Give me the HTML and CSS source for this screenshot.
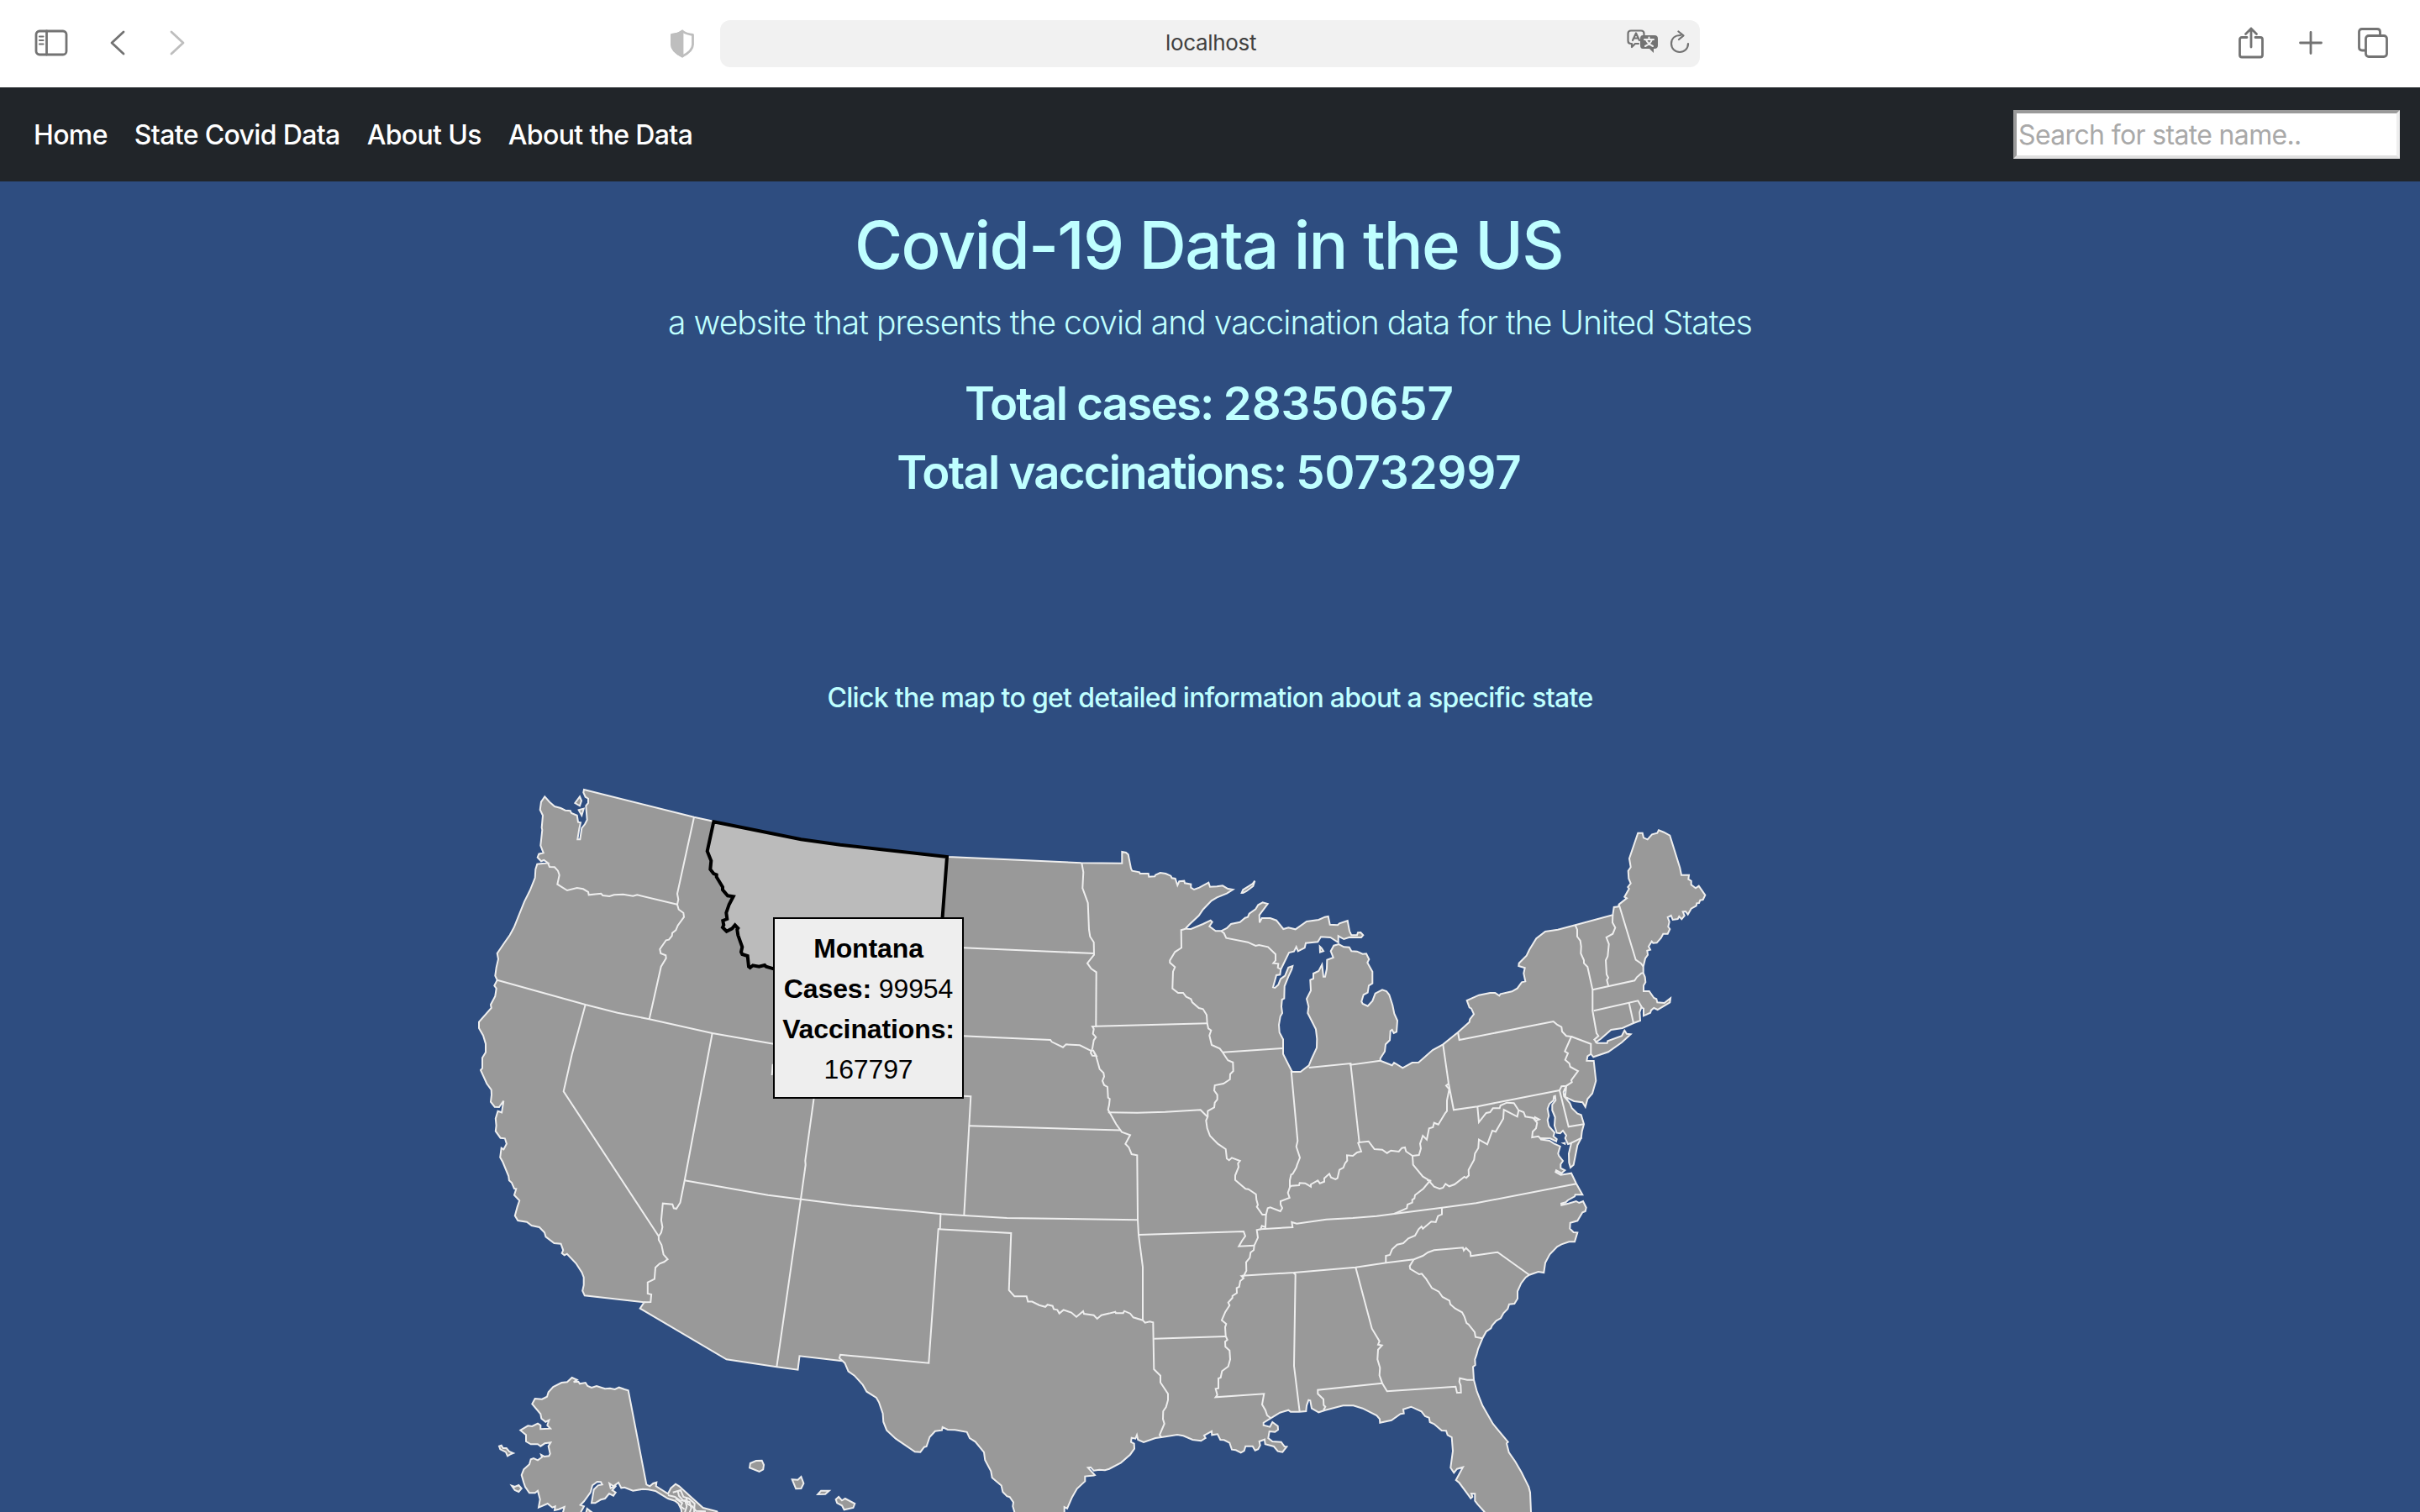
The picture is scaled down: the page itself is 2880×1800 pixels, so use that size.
FILE: index.html
```html
<!DOCTYPE html>
<html lang="en">
<head>
<meta charset="utf-8">
<title>Covid-19 Data in the US</title>
<link rel="stylesheet" href="styles.css">
</head>
<body>
<header class="toolbar">
  <div class="tools tools-left">
    <svg class="icon" width="40" height="32" viewBox="0 0 40 32"><rect x="2" y="2" width="36" height="28" rx="4"/><path d="M14.500 2V30"/><path class="thin" d="M6 8.500h4.500M6 13h4.500M6 17.500h4.500"/></svg>
    <svg class="icon back" width="20" height="30" viewBox="0 0 20 30"><path d="M17 2L3 15L17 28"/></svg>
    <svg class="icon forward pale" width="20" height="30" viewBox="0 0 20 30"><path d="M3 2L17 15L3 28"/></svg>
  </div>
  <svg class="icon shield pale" width="30" height="34" viewBox="0 0 30 34"><path d="M15 2C11 5 6 6 2.500 6.500V18C2.500 25 9 29 15 32C21 29 27.500 25 27.500 18V6.500C24 6 19 5 15 2Z"/><path class="solid" d="M15 2C11 5 6 6 2.500 6.500V18C2.500 25 9 29 15 32Z"/></svg>
  <div class="address">
    <span class="host">localhost</span>
    <svg class="icon translate" width="38" height="30" viewBox="0 0 38 30"><path class="thin" d="M14 17H10L6 21V17H5Q1.500 17 1.500 13.500V5Q1.500 1.500 5 1.500H17Q20.500 1.500 20.500 5V7"/><path class="thin" d="M7 13L11 4.500L15 13M8.500 10.500H13.500"/><path class="solid" stroke="none" d="M19 7H33Q37 7 37 11V19Q37 23 33 23H32V28L27 23H19Q16 23 16 19V11Q16 7 19 7Z"/><path class="glyph" d="M21 12H32M26.500 9.500V12M30 12Q28.500 17 22 20M23 12.500Q25 17 31 20"/></svg>
    <svg class="icon" width="24" height="28" viewBox="0 0 24 28"><path class="thin" d="M13 6C6 6 2 10 2 16C2 22 6.500 26 12 26C17.500 26 22 22 22 16M10.500 1.500L16.500 6.300L11 11"/></svg>
  </div>
  <div class="tools tools-right">
    <svg class="icon" width="32" height="40" viewBox="0 0 32 40"><path d="M11 13.500H5Q2.500 13.500 2.500 16V34.500Q2.500 37 5 37H27Q29.500 37 29.500 34.500V16Q29.500 13.500 27 13.500H21M16 25V3M9.500 9.500L16 3L22.500 9.500"/></svg>
    <svg class="icon plus" width="28" height="28" viewBox="0 0 28 28"><path d="M14 1.500V26.500M1.500 14H26.500"/></svg>
    <svg class="icon tabs" width="38" height="38" viewBox="0 0 38 38"><path d="M10 28H6Q2.500 28 2.500 24.500V6Q2.500 2.500 6 2.500H24Q27.500 2.500 27.500 6V10"/><rect x="10.500" y="10.500" width="25" height="25" rx="3.500"/></svg>
  </div>
</header>

<nav class="navbar">
  <ul class="links">
    <li><a class="home">Home</a></li>
    <li><a class="states">State Covid Data</a></li>
    <li><a class="about">About Us</a></li>
    <li><a class="data">About the Data</a></li>
  </ul>
  <input class="search" type="text" placeholder="Search for state name..">
</nav>

<main>
  <h1>Covid-19 Data in the US</h1>
  <p class="lead">a website that presents the covid and vaccination data for the United States</p>
  <h2 class="cases">Total cases: <span class="count">28350657</span></h2>
  <h2 class="vaccinations">Total vaccinations: <span class="count">50732997</span></h2>
  <p class="hint">Click the map to get detailed information about a specific state</p>
  <div class="map">
    <svg id="us-map" width="2880" height="920" viewBox="0 880 2880 920"></svg>
    <div class="tooltip"><b>Montana</b><br><b>Cases:</b> 99954<br><b>Vaccinations:</b><br>167797</div>
  </div>
</main>
<script src="map.js"></script>
</body>
</html>
```
FILE: styles.css
```css
* { box-sizing: border-box; }
body {
  margin: 0;
  width: 2880px;
  height: 1800px;
  overflow: hidden;
  background: #2e4d80;
  color: #bfffff;
  font-family: Inter, "Liberation Sans", sans-serif;
}
h1, h2, p, ul { margin: 0; padding: 0; font-weight: 400; text-align: center; }

.toolbar {
  height: 104px;
  background: #fff;
  display: flex;
  align-items: center;
  padding: 0 37px 0 41px;
}
.icon { display: block; fill: none; stroke: #737373; stroke-width: 2.8; stroke-linecap: round; stroke-linejoin: round; }
.icon .thin { stroke-width: 2.2; }
.icon .solid { fill: #737373; }
.icon .glyph { stroke: #f1f1f1; stroke-width: 2; }
.pale { stroke: #bebebe; }
.pale .solid { fill: #bebebe; }
.tools { display: flex; align-items: center; margin-top: -2px; }
.tools-left { width: 182px; }
.back { margin-left: 49px; }
.forward { margin-left: 51px; }
.shield { margin-left: 574px; }
.address {
  width: 1166px;
  height: 56px;
  margin-left: 30px;
  padding: 0 12px 0 166px;
  border-radius: 12px;
  background: #f1f1f1;
  display: flex;
  align-items: center;
  gap: 13px;
}
.host { flex: 1; text-align: center; font-size: 26px; line-height: 54px; color: #404040; letter-spacing: -0.33px; padding-right: 64px; padding-bottom: 2px; }
.address .icon { margin-top: -4px; }
.tools-right { margin-left: auto; }
.plus { margin-left: 41px; }
.tabs { margin-left: 41px; }

.navbar {
  height: 112px;
  padding: 0 24px 0 40px;
  background: #212529;
  display: flex;
  align-items: center;
  justify-content: space-between;
}
.links { display: flex; gap: 32px; list-style: none; padding-top: 2px; }
.links a { color: #fff; font-size: 32px; line-height: 48px; letter-spacing: -0.65px; font-weight: 450; }
.search {
  width: 460px;
  height: 58px;
  padding: 2px;
  border: 4px solid;
  border-color: #9a9a9a #eee #e0e0e0 #9a9a9a;
  background: #fff;
  font-family: inherit;
  font-size: 32px;
  letter-spacing: -0.65px;
}
.search::placeholder { color: #a9a9a9; opacity: 1; }

main { padding-top: 28px; }
h1 { font-size: 78px; line-height: 96px; font-weight: 500; letter-spacing: -1.7px; padding-right: 3px; }
.lead { margin-top: 14px; font-size: 39px; line-height: 60px; font-weight: 330; letter-spacing: -0.96px; }
h2 { font-size: 54.5px; line-height: 68px; font-weight: 560; letter-spacing: -1.75px; padding-right: 2px; }
.count { letter-spacing: 0; }
.cases { margin-top: 32px; }
.vaccinations { margin-top: 14px; }
.hint { margin-top: 211px; font-size: 32px; line-height: 48px; font-weight: 450; letter-spacing: -0.7px; }
.map { position: relative; margin-top: 25px; height: 920px; }
.map svg { display: block; }
.land { fill: #999; stroke: #eee; stroke-width: 2; }
.border { fill: none; stroke: #eee; stroke-width: 2; }
.active { fill: #bbb; stroke: #000; stroke-width: 4; }
.tooltip {
  position: absolute;
  left: 920px;
  top: 212px;
  width: 227px;
  height: 216px;
  padding-top: 11px;
  border: 2px solid #000;
  background: #eee;
  color: #000;
  text-align: center;
  font-family: "Liberation Sans", Arial, sans-serif;
  font-size: 32px;
  line-height: 48px;
  letter-spacing: -0.12px;
}
```
FILE: map.js
```js
// Each sheet of the map has its own grid: [origin x, origin y, x scale, y scale].
const sheets = {
  nw: [560, 920, 1 / 3, 1 / 3],
  sw: [560, 1280, 600 / 1568, 1 / 3],
  mt: [820, 940, 1 / 3, 1 / 3],
  plains: [1100, 980, 1 / 3, 820 / 1568],
  lakes: [1320, 980, 1 / 3, 1 / 3],
  ne: [1640, 960, 1 / 3, 1 / 3],
  gulf: [1320, 1380, 1 / 3, 1 / 3],
  se: [1640, 1380, 1 / 3, 1 / 3],
  ak: [580, 1630, 1 / 3, 1 / 3]
};

// Outline of the contiguous states, counterclockwise from the top of Idaho.
const mainland = [
  ["nw", "860,172 798,158 405,60 403,70 410,86 420,92 420,108 412,118 416,168 408,184 397,198 391,238 382,238 388,200 393,178 384,176 380,152 360,144 356,136 338,134 322,126 300,120 282,104 265,85 252,104 248,132 258,152 254,196 256,204 250,260 260,286 244,290 239,302 252,316 262,312 276,322 238,326 232,345 230,375 212,420 192,460 155,552 140,580 122,605 95,645 99,665 92,695 88,725 95,740 85,760 92,770 88,798 72,828 74,840 30,890 30,912 45,938 54,968 54,998 42,1018 42,1055 36,1062 58,1110 74,1132 75,1150 72,1175 86,1193 102,1194 112,1180 118,1172"],
  ["sw", "97,133 85,128 78,155 80,180 78,200 93,224 107,226 112,245 103,265 96,260 92,293 100,310 118,360 120,376 128,384 136,405 142,406 136,428 152,448 145,472 138,502 147,519 175,524 190,537 214,543 230,562 234,577 260,600 281,602 288,625 284,636 292,643 300,638 328,672 346,704 352,722 352,750 348,770 355,787 540,811 527,833 796,1015 952,1042 1018,1052 1023,1003 1157,1021 1164,1028 1175,1058 1194,1073 1220,1106 1232,1130 1262,1152 1270,1168 1282,1208 1284,1238 1294,1268 1322,1298 1382,1345 1399,1346 1411,1328 1418,1326 1428,1292 1445,1271 1466,1268 1468,1257 1484,1266 1508,1267"],
  ["plains", "110,1381 152,1386 162,1400 182,1408 213,1432 217,1450 238,1475 242,1490 275,1508 280,1522 295,1532 305,1534 318,1546 316,1555 322,1568 330,1600 500,1600 500,1557 510,1560 528,1534 545,1515 574,1498 574,1487 605,1485 609,1484 584,1467 594,1466 605,1474 625,1472 645,1473"],
  ["gulf", "0,1106 42,1084 75,1055 90,1034 89,1016 78,1010 80,995 94,998 99,985 103,1002 123,1011 165,996 187,993 243,984 265,988 298,1002 328,1006 344,996 339,987 366,972 367,985 387,982 397,1002 410,1003 430,1013 438,1037 452,1039 470,1048 482,1041 487,1025 512,1025 521,1040 532,1036 539,1022 536,1008 555,1001 557,1018 588,1026 602,1043 619,1046 634,1027 626,1026 614,1010 583,1008 568,996 572,972 592,974 603,966 602,953 583,939 574,956 551,950 551,941 577,925 610,905 640,896 648,902 678,902 703,900 705,880 712,860 718,862 723,890 748,904 772,896 835,880 872,880 905,890 955,915 966,928 967,941 1008,932 1040,910 1052,908 1050,893 1078,884 1115,901 1128,918 1142,923 1145,939 1160,946 1187,969"],
  ["se", "243,970 248,985 263,993 267,1042 259,1102 271,1120 282,1106 303,1100 278,1146 290,1156 331,1211 337,1206 333,1194 346,1195 346,1220 355,1232 380,1260 380,1300 548,1300 546,1260 543,1190 538,1170 512,1118 490,1080 467,1047 459,1015 464,1010 410,945 373,880 353,830 342,788 339,742 347,735 346,715 352,698 357,678 373,640 386,616 403,604 407,594 422,577 438,568 448,550 463,535 468,518 487,516 498,498 498,472 511,443 527,422 540,413 572,402 592,405 597,370 613,340 640,312 655,304 682,295 702,295 712,262 698,261 685,248 686,227 712,220 730,190 740,186 743,173 732,150 718,156 707,150 680,158 655,164 654,158 670,154 678,146 702,133 704,127 730,127 708,88 690,50 652,56 634,46 636,40 655,50 667,40 652,32 652,18 660,6"],
  ["ne", "646,1248 643,1240 650,1214 628,1204 612,1194 582,1190 580,1185 615,1186 636,1196 638,1188 626,1178 630,1165 610,1142 605,1120 610,1105 605,1080 612,1062 626,1050 628,1036 632,1034 634,1050 622,1065 622,1085 632,1110 630,1140 638,1166 650,1168 660,1158 672,1175 668,1185 678,1206 690,1202 681,1240 682,1272 687,1290 698,1280 712,1210 725,1185 728,1160 735,1135 725,1102 712,1097 692,1078 685,1060 664,1035 662,1020 672,998 668,1038 700,1053 730,1057 740,1073 748,1045 765,1025 778,980 770,909 745,908 748,892 760,884 769,895 822,877 870,843 902,814 888,812 880,800 870,820 820,838 818,845 782,845 778,842 795,830 832,798 872,792 912,774 936,765 934,735 940,718 948,722 948,748 972,737 975,728 985,720 998,726 1042,700 1044,685 1022,702 997,700 994,688 985,684 968,660 948,660 948,640 955,628 953,610 947,595 947,572 954,543 963,530 961,515 972,512 966,500 977,482 982,488 995,487 1010,470 1018,455 1034,455 1042,438 1036,430 1040,412 1034,396 1046,390 1052,405 1070,402 1075,393 1084,403 1094,390 1088,376 1098,375 1106,386 1118,365 1136,355 1138,346 1146,345 1150,335 1160,333 1168,317 1145,284 1134,292 1118,280 1118,266 1108,260 1110,245 1083,245 1078,220 1042,104 1020,92 1002,85 997,95 978,100 962,118 948,112 944,95 928,95 897,186 902,217 893,230 895,258 902,275 892,288 896,294 880,323 888,328 860,350 858,358 842,360 838,388 704,424 642,440 597,447 565,472 540,512 530,533 503,560 502,570 524,577 520,596 526,625 513,628 497,650 478,661 437,670 433,676 418,666 400,666 360,674 317,693 326,718 333,722 342,742 328,760 326,770 285,807 232,850 195,870 145,914 122,915 88,934 57,915 50,925"],
  ["lakes", "968,848 968,840 984,815 987,790 1002,775 1004,742 1010,738 1016,750 1026,745 1029,705 1018,680 1012,650 1000,613 990,600 975,595 950,608 940,635 923,653 905,645 901,637 908,613 923,605 927,580 940,572 940,530 922,498 928,486 918,466 905,467 885,458 865,457 857,443 838,442 820,432 802,437 791,457 800,480 778,488 777,520 771,548 765,548 760,505 748,528 729,537 729,555 718,560 720,598 705,627 712,655 709,678 738,736 742,770 741,802 722,843 713,865 683,888 655,888 650,882 621,824 621,772 608,748 606,720 611,690 618,678 615,655 617,630 625,626 626,582 640,548 652,522 655,510 640,515 628,545 612,556 604,577 592,588 585,586 597,543 610,541 613,522 642,462 660,458 668,442 674,457 698,445 702,428 745,424 756,406 790,408 818,426 818,403 838,414 858,407 900,408 907,400 898,390 888,391 885,400 865,400 858,385 851,348 822,358 816,364 788,362 782,333 770,335 748,345 705,351 665,379 640,373 622,378 597,347 575,339 545,339 537,355 536,328 566,288 548,283 532,292 523,307 500,323 495,335 485,338 467,353 435,360 420,375 400,385 380,385 358,368 368,353 362,347 335,360 292,378 272,377 285,363 320,330 335,308 365,277 385,265 420,251 442,237 424,234 405,223 385,226 360,227 355,212 322,230 303,237 292,230 292,218 270,214 268,206 250,208 244,222 236,198 224,196 220,188 202,180 182,177 165,185 163,190 142,191 140,180 110,180 108,175 82,170 78,162 68,112 60,105 46,102 46,143"],
  ["mt", "1400,262 925,240 700,215 540,197 400,178 88,115"]
];

const islands = [
  ["nw", "373,108 390,85 396,100 390,118"],
  ["nw", "386,133 404,128 397,152"],
  ["lakes", "473,249 478,238 500,224 512,216 520,206 514,225 490,243 478,249"],
  ["lakes", "752,440 758,446 765,457 753,461"],
  ["ne", "662,1203 667,1202 667,1205"],
  ["sw", "870,1386 888,1377 906,1376 912,1392 910,1408 898,1416 868,1402"],
  ["sw", "1000,1444 1018,1445 1028,1434 1036,1458 1028,1476 1012,1477"],
  ["sw", "1080,1497 1090,1484 1115,1484 1103,1496"],
  ["sw", "1136,1515 1145,1506 1155,1519 1165,1512 1195,1530 1190,1545 1162,1552 1155,1537 1140,1528"],
  ["ak", "503,76 568,412 580,418 592,408 604,404 602,418 645,445 655,425 672,410 685,418 720,450 770,495 820,508 830,530 695,530 692,500 682,480 670,470 645,462 600,435 575,430 555,428 520,434 490,422 478,424 468,405 450,418 436,408 440,425 460,416 446,432 458,440 450,452 435,444 420,462 405,466 385,478 372,478 376,455 380,430 395,415 410,412 405,403 392,402 375,415 368,440 345,472 332,485 345,490 335,508 330,530 265,530 275,492 255,500 240,504 242,490 232,494 215,480 183,494 188,465 180,434 170,442 150,442 135,420 130,405 122,378 130,358 150,340 155,322 165,318 180,325 195,314 192,306 203,312 220,310 224,302 218,275 226,262 205,265 190,275 180,268 155,268 138,258 138,235 118,218 145,202 160,204 180,194 190,200 190,214 225,212 214,200 220,182 208,188 193,176 190,160 160,124 170,105 195,107 213,98 218,82 235,63 265,48 285,46 302,30 320,38 308,46 325,44 330,52 350,48 358,60 372,66 390,60 420,70 438,68 455,72 470,65 490,72"],
  ["ak", "42,275 50,272 56,282 68,282 78,294 92,300 82,304 72,310 66,296 46,286"],
  ["ak", "87,416 98,420 112,414 122,426 112,438 98,432"],
  ["ak", "356,498 372,510 352,514"]
];

// Lines between the states; segments of one line may sit on several sheets.
const borders = [
  [["nw", "276,322 282,336 300,337 312,350 317,365 310,398 345,420 380,411 402,415 420,426 422,436 466,431 472,438 496,441 512,436 545,434 580,440 595,436 738,470"]],
  [["nw", "798,158 738,432 742,452 738,470 743,488 760,500 762,515 740,545 733,562 720,572 719,582 708,596 698,598 676,630 679,645 697,652 698,662 680,692 638,880"]],
  [["nw", "95,740 410,828 525,857 638,880 863,930 1082,968"]],
  [["nw", "410,828 362,1005 332,1138"], ["sw", "585,575"]],
  [["nw", "863,930 812,1200"], ["sw", "666,375 652,455 640,477 632,475 628,461 598,458 593,518 597,542 593,562 585,575 585,588 594,606 600,640 613,657 602,667 588,673 575,687 572,728 551,740 551,780 562,783 560,810 540,811"]],
  [["nw", "1079,1040 1076,1080"]],
  [["sw", "666,376 925,428 1185,466 1400,488 1465,496"], ["plains", "142,893 295,899 660,902"]],
  [["sw", "1068,80 1041,305 1042,320 1027,443 952,1042"]],
  [["sw", "1462,495 1460,548"], ["plains", "50,924 16,1228"], ["sw", "1425,1028 1150,998 1147,1010 1157,1021"]],
  [["plains", "50,924 310,933 302,1063 322,1077 365,1077 370,1089 385,1089 410,1097 432,1101 440,1096 458,1099 462,1106 475,1108 482,1116 497,1108 525,1114 543,1124 567,1111 570,1117 605,1120 617,1128 632,1120 660,1116"], ["gulf", "22,545 24,550 50,550 54,542 75,551 86,565 120,575 128,584 145,580 157,583 160,750 183,773 183,797 210,838 210,860 203,885 193,900 192,928 197,945 180,985 187,993"]],
  [["plains", "142,893 166,622"], ["mt", "978,1094"]],
  [["plains", "161,689 700,699"]],
  [["mt", "978,565 1446,585"]],
  [["mt", "978,880 1105,886 1290,894 1295,901 1335,920 1346,910 1395,913 1430,930 1438,935"]],
  [["mt", "1402,262 1408,295 1405,352 1424,405 1428,500 1432,525 1445,545 1446,590 1422,620 1436,640 1454,652 1453,845 1440,846 1445,855 1442,872 1453,884 1445,895 1440,925 1434,940 1440,950 1454,951 1442,930 1454,955 1466,998 1480,1012 1482,1025 1476,1040 1482,1055 1494,1062 1496,1100"], ["lakes", "2,985 0,1005 -4,1023 25,1075 45,1103 75,1114 58,1145 70,1157 80,1182 100,1186"], ["gulf", "102,215 105,270 120,385 120,575"]],
  [["mt", "1453,845"], ["lakes", "350,715"]],
  [["lakes", "272,377 257,382 258,445 235,460 217,490 217,498 235,514 228,530 226,590 246,606 264,606 275,620 292,628 297,640 320,660 335,664 348,685 350,715 354,733 364,740 358,758 366,792 395,805 405,818 424,847 442,854 443,885 432,896 431,915 408,930 377,936 375,955 386,970 386,987 377,998 375,1015 352,1028 352,1048 346,1062 350,1090 360,1117 388,1145 416,1164 420,1198 428,1204 438,1195 467,1206"], ["gulf", "460,15 462,28 450,58 450,74 487,106 497,107 524,125 526,145 531,163 527,170 547,198 560,198"]],
  [["lakes", "-4,1033 100,1034 200,1031 326,1024 350,1048"]],
  [["lakes", "405,818 621,804"]],
  [["lakes", "400,385 410,393 418,410 495,425 523,438 535,435 567,442 594,468 594,490 586,500 604,502 602,516 613,522"]],
  [["lakes", "650,885 673,1135 668,1155 681,1195 671,1220 668,1230 655,1253 650,1254"], ["gulf", "650,53 645,75 645,100 638,120 644,138 612,150 612,162 618,175 611,186 575,172 566,175 560,198 558,243 545,238 541,250 527,253 531,280 518,308 516,325 505,333 502,352 489,368 490,398 480,418 473,418 480,425 468,435 464,456 455,460 456,478 440,488 440,495 425,512 430,522 415,545 402,575 418,588 414,600 416,632 422,645 414,652 415,670 430,683 432,715 425,740 403,757 398,780 390,783 390,818 380,820 386,842 380,850 553,838 546,876 558,897 564,915 577,925"]],
  [["lakes", "713,873 862,858 862,863 968,848"]],
  [["lakes", "862,858 893,1140 926,1136 947,1164 975,1166 992,1178 1006,1169 1034,1173 1045,1160 1056,1158 1060,1172 1083,1188 1106,1185 1113,1162 1110,1145 1120,1116 1134,1130 1142,1090 1156,1086 1160,1070 1175,1076"], ["ne", "240,1095 246,1088 246,1050 254,1010 243,997 252,990"]],
  [["lakes", "893,1140 889,1142 900,1172 885,1176 870,1188 849,1186 850,1205"], ["gulf", "842,15 836,30 822,38 815,68 808,72 792,65 786,52 768,68 768,80 752,86 745,76 720,90 720,98 700,86 680,85 678,93 650,95 645,100"]],
  [["gulf", "1083,-12 1085,20 1120,62 1145,77 1122,105 1092,128 1090,140 1082,145 1082,155 1065,162 1063,175 1018,195"]],
  [["gulf", "541,250 655,243 652,225 670,230 775,215 870,210 955,203 1018,195"], ["se", "228,173 350,157 708,88"]],
  [["gulf", "1135,75 1150,77"], ["se", "182,78 200,98 220,106 232,102 241,88 254,97 273,90 308,63 315,67 324,58 323,38"], ["ne", "343,1262 346,1240 358,1220 360,1190 390,1207 408,1158 420,1162 447,1115 449,1083 497,1108 502,1085"]],
  [["ne", "355,1072 360,1128 386,1095 400,1092 410,1078 434,1078 437,1068 460,1058 485,1060 502,1085 520,1092 526,1108 552,1112 565,1122 575,1118 560,1110 558,1118 568,1130 564,1150 552,1162 550,1182 572,1178 582,1188"]],
  [["ne", "232,850 252,990 270,1084 355,1072 452,1052 648,1014"]],
  [["ne", "285,807 290,834 626,768 640,780 655,788 657,804 672,820 690,822 667,875 678,882 668,905 683,918 686,930 714,945 690,978 692,985 672,998 655,1000 648,1014 680,1144 735,1135"]],
  [["ne", "690,822 760,848 760,884"]],
  [["ne", "690,1202 728,1183"]],
  [["ne", "704,424 711,440 711,465 722,480 725,500 724,525 735,550 735,560 748,573 766,655 766,730 780,810 787,820 772,833 782,845"]],
  [["ne", "838,388 837,415 847,433 838,455 815,468 824,492 820,535 813,550 816,600 822,612 817,620 822,640"]],
  [["ne", "766,655 916,622 924,610 940,596 947,595"]],
  [["ne", "860,350 920,548 938,560 947,572"]],
  [["ne", "770,730 928,694 942,718"]],
  [["ne", "896,702 912,774"]],
  [["gulf", "0,215 102,217"]],
  [["gulf", "105,270 480,258 486,275 475,290 463,311 518,308"]],
  [["gulf", "473,416 660,405 880,386 990,370 1088,358"], ["se", "160,345 178,333 200,325 303,316 306,326 314,317 330,333 331,346 427,332 540,413"]],
  [["se", "28,370 28,345 42,342 50,322 68,305 90,300 108,283 132,273 145,250 155,240 160,248 190,223 206,225 214,203 228,197 228,173"]],
  [["gulf", "657,405 665,412 660,738 680,902"]],
  [["gulf", "880,386 938,605 965,650 960,662 974,665 960,680 958,715 967,745 965,772 975,800 992,829"], ["se", "277,812 282,834 296,833 295,808 290,795 292,782 318,788 342,788"]],
  [["gulf", "975,800 745,824 745,838 765,857 766,878 772,884 765,896"]],
  [["se", "128,357 113,382 115,392 147,411 156,409 172,428 192,460 217,473 230,492 255,505 258,518 275,533 300,547 308,562 316,585 323,590 345,618 348,635 373,640"]],
  [["gulf", "160,641 414,633"]],
  // channels of the Alaska panhandle
  [["ak", "662,440 690,432 700,456 720,462 740,480 738,510"]],
  [["ak", "645,450 670,456 690,470 706,468 712,490 705,512"]],
  [["ak", "680,436 684,452 700,470 722,474 728,496 722,512"]],
  [["ak", "672,462 696,478 690,490 704,500"]],
  [["ak", "710,460 716,482 732,490 745,506 780,508"]]
];

const montana = [["mt", "88,115 400,178 540,197 700,215 921,240 900,520 850,700 302,640 275,632 270,627 250,632 228,628 218,636 213,632 209,594 190,588 186,580 190,562 175,520 172,500 175,495 164,484 154,496 134,506 120,492 124,484 121,468 136,462 133,440 143,410 158,382 138,379 120,358 120,348 98,312 98,304 88,300 76,285 79,254 65,220"]];

function points(segments) {
  return segments.flatMap(([name, list]) => {
    const [ox, oy, sx, sy] = sheets[name];
    return list.split(" ").map(pair => {
      const [x, y] = pair.split(",").map(Number);
      return (ox + x * sx).toFixed(1) + "," + (oy + y * sy).toFixed(1);
    });
  }).join(" ");
}

function draw(shape, className, segments) {
  const node = document.createElementNS("http://www.w3.org/2000/svg", shape);
  node.setAttribute("class", className);
  node.setAttribute("points", points(segments));
  document.getElementById("us-map").appendChild(node);
}

draw("polygon", "land", mainland);
islands.forEach(island => draw("polygon", "land", [island]));
borders.forEach(border => draw("polyline", "border", border));
draw("polygon", "active", montana);
```
